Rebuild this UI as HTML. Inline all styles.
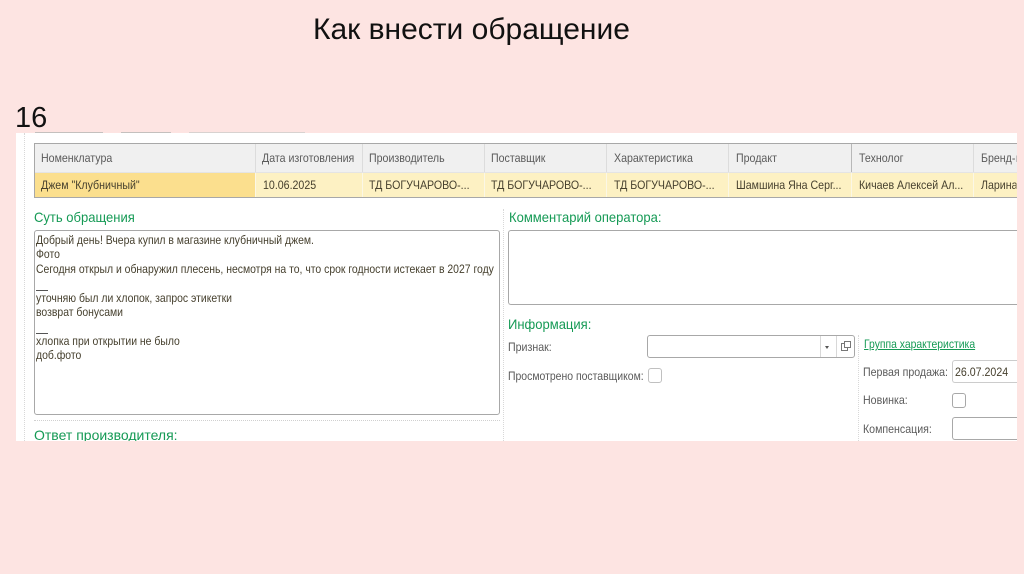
<!DOCTYPE html>
<html lang="ru">
<head>
<meta charset="utf-8">
<style>
html,body{margin:0;padding:0}
body{width:1024px;height:574px;background:#fde4e2;overflow:hidden;position:relative;font-family:"Liberation Sans",sans-serif}
.a{position:absolute;white-space:nowrap}
#s{position:absolute;left:16px;top:133px;width:1001px;height:308px;background:#fff;overflow:hidden;filter:blur(.3px)}
.t{font-size:12px;color:#5a5a5a;line-height:14px;transform-origin:0 50%;transform:scaleX(.885)}
.c{color:#46402e}
.g{font-size:14px;color:#159a55;line-height:16px;transform-origin:0 50%;transform:scaleX(.93)}
.b{position:absolute;background:#fff;border:1px solid #a8a8a8;border-radius:3px;box-sizing:border-box}
.d{position:absolute;border-left:1px dotted #d8d8d8}
.m{position:absolute;background:#dedede}
.h{position:absolute;top:11px;height:28px;background:#f0f0f0;border-right:1px solid #dcdcdc;box-sizing:border-box}
.r{position:absolute;top:40px;height:24px;background:#fdf1c3;border-right:1px solid #fbf7e6;box-sizing:border-box}
</style>
</head>
<body>
<div class="a" style="left:313px;top:12px;font-size:30px;line-height:36px;color:#111">Как внести обращение</div>
<div class="a" style="left:15px;top:100px;font-size:29px;line-height:36px;color:#111">16</div>

<div class="m" style="left:35px;top:132px;width:68px;height:2px;background:#c4c0be"></div>
<div class="m" style="left:121px;top:132px;width:50px;height:2px;background:#c4c0be"></div>
<div class="m" style="left:189px;top:132px;width:116px;height:2px;background:#d8d2d0"></div>

<div id="s">
  <div class="d" style="left:8px;top:0;height:308px"></div>

  <div class="m" style="left:18px;top:10px;width:983px;height:1px;background:#a8a8a8"></div>
  <div class="h" style="left:19px;width:221px"></div>
  <div class="h" style="left:240px;width:107px"></div>
  <div class="h" style="left:347px;width:122px"></div>
  <div class="h" style="left:469px;width:122px"></div>
  <div class="h" style="left:591px;width:122px"></div>
  <div class="h" style="left:713px;width:123px;border-right-color:#b8b8b8"></div>
  <div class="h" style="left:836px;width:122px"></div>
  <div class="h" style="left:958px;width:43px;border-right:0"></div>
  <div class="m" style="left:18px;top:39px;width:983px;height:1px;background:#e4e4e4"></div>
  <div class="r" style="left:19px;width:221px;background:#fbdf8e"></div>
  <div class="r" style="left:240px;width:107px"></div>
  <div class="r" style="left:347px;width:122px"></div>
  <div class="r" style="left:469px;width:122px"></div>
  <div class="r" style="left:591px;width:122px"></div>
  <div class="r" style="left:713px;width:123px"></div>
  <div class="r" style="left:836px;width:122px"></div>
  <div class="r" style="left:958px;width:43px;border-right:0"></div>
  <div class="m" style="left:18px;top:64px;width:983px;height:1px;background:#a8a8a8"></div>
  <div class="m" style="left:18px;top:10px;width:1px;height:55px;background:#a8a8a8"></div>

  <div class="a t" style="left:25px;top:18px">Номенклатура</div>
  <div class="a t" style="left:246px;top:18px">Дата изготовления</div>
  <div class="a t" style="left:353px;top:18px">Производитель</div>
  <div class="a t" style="left:475px;top:18px">Поставщик</div>
  <div class="a t" style="left:598px;top:18px">Характеристика</div>
  <div class="a t" style="left:720px;top:18px">Продакт</div>
  <div class="a t" style="left:843px;top:18px">Технолог</div>
  <div class="a t" style="left:965px;top:18px;width:40px;overflow:hidden">Бренд-шеф</div>

  <div class="a t c" style="left:25px;top:45px">Джем "Клубничный"</div>
  <div class="a t c" style="left:247px;top:45px">10.06.2025</div>
  <div class="a t c" style="left:353px;top:45px">ТД БОГУЧАРОВО-...</div>
  <div class="a t c" style="left:475px;top:45px">ТД БОГУЧАРОВО-...</div>
  <div class="a t c" style="left:598px;top:45px">ТД БОГУЧАРОВО-...</div>
  <div class="a t c" style="left:720px;top:45px">Шамшина Яна Серг...</div>
  <div class="a t c" style="left:843px;top:45px">Кичаев Алексей Ал...</div>
  <div class="a t c" style="left:965px;top:45px;width:40px;overflow:hidden">Ларина</div>

  <div class="a g" style="left:18px;top:76px">Суть обращения</div>
  <div class="a g" style="left:493px;top:76px">Комментарий оператора:</div>

  <div class="b" style="left:18px;top:97px;width:466px;height:185px"></div>
  <div class="a t c" style="left:20px;top:100px;line-height:14.4px;transform-origin:0 0;transform:scaleX(.868)">Добрый день! Вчера купил в магазине клубничный джем.<br>Фото<br>Сегодня открыл и обнаружил плесень, несмотря на то, что срок годности истекает в 2027 году<br><br>уточняю был ли хлопок, запрос этикетки<br>возврат бонусами<br><br>хлопка при открытии не было<br>доб.фото</div>
  <div class="m" style="left:20px;top:157px;width:12px;height:1px;background:#555"></div>
  <div class="m" style="left:20px;top:200px;width:12px;height:1px;background:#555"></div>

  <div class="d" style="left:487px;top:76px;height:232px"></div>
  <div style="position:absolute;left:18px;top:287px;width:466px;border-top:1px dotted #d0d0d0"></div>
  <div class="a g" style="left:18px;top:294px;transform:none">Ответ производителя:</div>

  <div class="b" style="left:492px;top:97px;width:509px;height:75px;border-right:0;border-radius:3px 0 0 3px"></div>
  <div class="a g" style="left:492px;top:183px">Информация:</div>

  <div class="a t" style="left:492px;top:207px">Признак:</div>
  <div class="b" style="left:631px;top:202px;width:208px;height:23px"></div>
  <div class="m" style="left:804px;top:203px;width:1px;height:21px;background:#d8d8d8"></div>
  <div class="m" style="left:820px;top:203px;width:1px;height:21px;background:#d8d8d8"></div>
  <div style="position:absolute;left:809px;top:213px;width:0;height:0;border-left:2.5px solid transparent;border-right:2.5px solid transparent;border-top:3px solid #555"></div>
  <svg style="position:absolute;left:824px;top:207px" width="12" height="12" viewBox="0 0 12 12" fill="#fff" stroke="#777" stroke-width="1"><rect x="1.5" y="3.5" width="6" height="7"/><rect x="4.5" y="1.5" width="6" height="6"/></svg>

  <div class="a t" style="left:492px;top:236px;transform:scaleX(.87)">Просмотрено поставщиком:</div>
  <div class="b" style="left:632px;top:235px;width:14px;height:15px;border-color:#c0c0c0"></div>

  <div class="d" style="left:842px;top:202px;height:106px"></div>

  <div class="a t" style="left:848px;top:204px;color:#159a55;text-decoration:underline;transform:scaleX(.865)">Группа характеристика</div>
  <div class="a t" style="left:847px;top:232px">Первая продажа:</div>
  <div class="b" style="left:936px;top:227px;width:65px;height:23px;border-right:0;border-radius:3px 0 0 3px;border-color:#ccc"></div>
  <div class="a t c" style="left:939px;top:232px">26.07.2024</div>
  <div class="a t" style="left:847px;top:260px">Новинка:</div>
  <div class="b" style="left:936px;top:260px;width:14px;height:15px"></div>
  <div class="a t" style="left:847px;top:289px">Компенсация:</div>
  <div class="b" style="left:936px;top:284px;width:65px;height:23px;border-right:0;border-radius:3px 0 0 3px"></div>
</div>
</body>
</html>
